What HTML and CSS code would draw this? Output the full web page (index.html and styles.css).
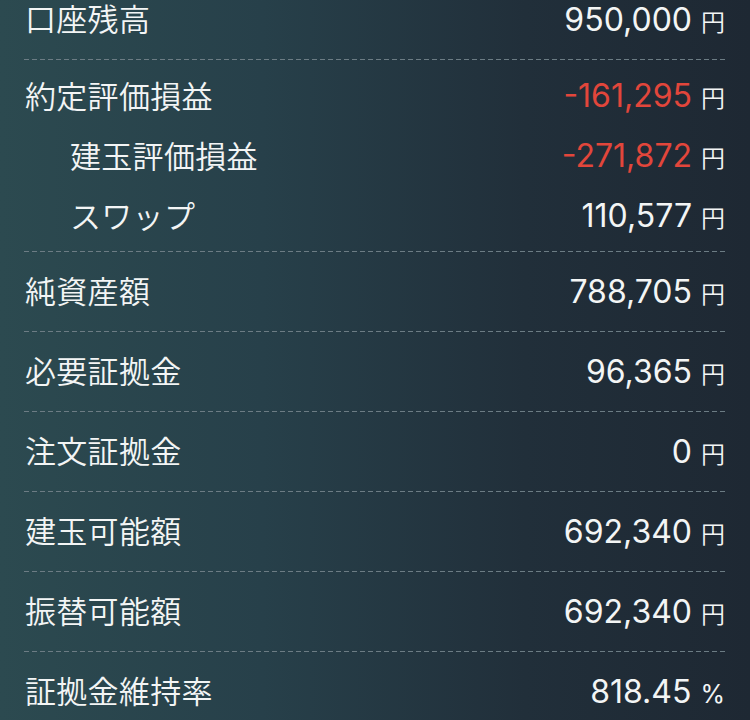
FILE: index.html
```html
<!DOCTYPE html>
<html lang="ja">
<head>
<meta charset="utf-8">
<title>口座状況</title>
<link rel="stylesheet" href="styles.css">
</head>
<body>
<div class="list">
  <div class="row first">
    <span class="label">口座残高</span>
    <span class="value"><span class="num">950,000</span><span class="unit">円</span></span>
  </div>
  <div class="sep"></div>
  <div class="group">
    <div class="subrow">
      <span class="label">約定評価損益</span>
      <span class="value"><span class="num neg">-161,295</span><span class="unit">円</span></span>
    </div>
    <div class="subrow indent">
      <span class="label">建玉評価損益</span>
      <span class="value"><span class="num neg">-271,872</span><span class="unit">円</span></span>
    </div>
    <div class="subrow indent">
      <span class="label">スワップ</span>
      <span class="value"><span class="num">110,577</span><span class="unit">円</span></span>
    </div>
  </div>
  <div class="sep"></div>
  <div class="row">
    <span class="label">純資産額</span>
    <span class="value"><span class="num">788,705</span><span class="unit">円</span></span>
  </div>
  <div class="sep"></div>
  <div class="row">
    <span class="label">必要証拠金</span>
    <span class="value"><span class="num">96,365</span><span class="unit">円</span></span>
  </div>
  <div class="sep"></div>
  <div class="row">
    <span class="label">注文証拠金</span>
    <span class="value"><span class="num">0</span><span class="unit">円</span></span>
  </div>
  <div class="sep"></div>
  <div class="row">
    <span class="label">建玉可能額</span>
    <span class="value"><span class="num">692,340</span><span class="unit">円</span></span>
  </div>
  <div class="sep"></div>
  <div class="row">
    <span class="label">振替可能額</span>
    <span class="value"><span class="num">692,340</span><span class="unit">円</span></span>
  </div>
  <div class="sep"></div>
  <div class="row">
    <span class="label">証拠金維持率</span>
    <span class="value"><span class="num">818.45</span><span class="unit pct">%</span></span>
  </div>
</div>
</body>
</html>
```
FILE: styles.css
```css
html, body {
  margin: 0;
  padding: 0;
}
body {
  width: 750px;
  height: 720px;
  overflow: hidden;
  background: linear-gradient(90deg, #2c4a50 0%, #27404a 35%, #212f3a 70%, #1e2833 100%);
  color: #f3f5f5;
  font-family: "Noto Sans CJK JP", "Noto Sans", sans-serif;
}
.list {
  padding: 0 23px 0 24px;
}
.row, .subrow {
  display: flex;
  align-items: center;
  justify-content: space-between;
  padding-left: 1px;
  padding-right: 2px;
}
.row {
  height: 79px;
}
.row.first {
  height: 39px;
  margin-bottom: 20px;
}
.group {
  padding: 6px 0 5px;
}
.subrow {
  height: 60px;
}
.subrow.indent {
  padding-left: 46px;
}
.label {
  font-size: 31px;
  line-height: 1;
  font-weight: 350;
  letter-spacing: 0.3px;
  padding-bottom: 4px;
}
.value {
  display: flex;
  align-items: baseline;
}
.num {
  font-family: "Inter", "Liberation Sans", sans-serif;
  font-size: 32px;
  line-height: 1;
  font-weight: 400;
  color: #f3f5f5;
}
.num.neg {
  color: #e2463b;
}
.unit {
  font-family: "Noto Sans CJK JP", sans-serif;
  font-size: 24px;
  font-weight: 350;
  line-height: 1;
  margin-left: 9px;
}
.unit.pct {
  font-family: "Inter", sans-serif;
  font-size: 25px;
  font-weight: 400;
  margin-left: 9px;
}
.sep {
  height: 1px;
  background-image: repeating-linear-gradient(90deg, #6c7c84 0 5px, transparent 5px 8px);
}
```
